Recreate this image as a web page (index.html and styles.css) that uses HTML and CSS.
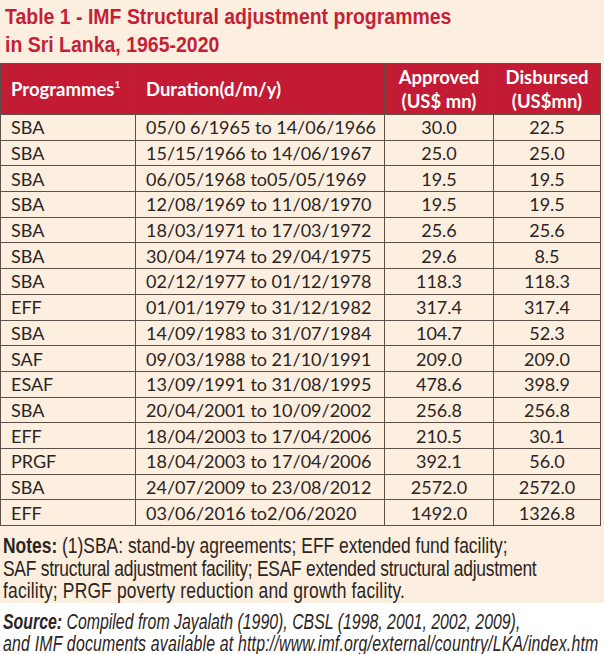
FILE: index.html
```html
<!DOCTYPE html>
<html>
<head>
<meta charset="utf-8">
<link rel="stylesheet" href="styles.css">
</head>
<body>
<div class="page">
  <div class="panel">
    <h1 class="title">Table 1 - IMF Structural adjustment programmes<br>in Sri Lanka, 1965-2020</h1>
    <table class="data">
      <colgroup>
        <col class="c1"><col class="c2"><col class="c3"><col class="c4">
      </colgroup>
      <thead>
        <tr>
          <th class="left">Programmes<sup>1</sup></th>
          <th class="left">Duration(d/m/y)</th>
          <th>Approved<br>(US$ mn)</th>
          <th>Disbursed<br>(US$mn)</th>
        </tr>
      </thead>
      <tbody>
        <tr><td>SBA</td><td>05/0 6/1965 to 14/06/1966</td><td class="num">30.0</td><td class="num">22.5</td></tr>
        <tr><td>SBA</td><td>15/15/1966 to 14/06/1967</td><td class="num">25.0</td><td class="num">25.0</td></tr>
        <tr><td>SBA</td><td>06/05/1968 to05/05/1969</td><td class="num">19.5</td><td class="num">19.5</td></tr>
        <tr><td>SBA</td><td>12/08/1969 to 11/08/1970</td><td class="num">19.5</td><td class="num">19.5</td></tr>
        <tr><td>SBA</td><td>18/03/1971 to 17/03/1972</td><td class="num">25.6</td><td class="num">25.6</td></tr>
        <tr><td>SBA</td><td>30/04/1974 to 29/04/1975</td><td class="num">29.6</td><td class="num">8.5</td></tr>
        <tr><td>SBA</td><td>02/12/1977 to 01/12/1978</td><td class="num">118.3</td><td class="num">118.3</td></tr>
        <tr><td>EFF</td><td>01/01/1979 to 31/12/1982</td><td class="num">317.4</td><td class="num">317.4</td></tr>
        <tr><td>SBA</td><td>14/09/1983 to 31/07/1984</td><td class="num">104.7</td><td class="num">52.3</td></tr>
        <tr><td>SAF</td><td>09/03/1988 to 21/10/1991</td><td class="num">209.0</td><td class="num">209.0</td></tr>
        <tr><td>ESAF</td><td>13/09/1991 to 31/08/1995</td><td class="num">478.6</td><td class="num">398.9</td></tr>
        <tr><td>SBA</td><td>20/04/2001 to 10/09/2002</td><td class="num">256.8</td><td class="num">256.8</td></tr>
        <tr><td>EFF</td><td>18/04/2003 to 17/04/2006</td><td class="num">210.5</td><td class="num">30.1</td></tr>
        <tr><td>PRGF</td><td>18/04/2003 to 17/04/2006</td><td class="num">392.1</td><td class="num">56.0</td></tr>
        <tr><td>SBA</td><td>24/07/2009 to 23/08/2012</td><td class="num">2572.0</td><td class="num">2572.0</td></tr>
        <tr><td>EFF</td><td>03/06/2016 to2/06/2020</td><td class="num">1492.0</td><td class="num">1326.8</td></tr>
      </tbody>
    </table>
    <p class="notes"><span class="line"><b>Notes:</b> (1)SBA: stand-by agreements; EFF extended fund facility;</span><span class="line tight">SAF structural adjustment facility; ESAF extended structural adjustment</span><span class="line loose">facility; PRGF poverty reduction and growth facility.</span></p>
  </div>
  <p class="source"><span class="line"><b>Source:</b> Compiled from Jayalath (1990), CBSL (1998, 2001, 2002, 2009),</span><span class="line loose">and IMF documents available at http://www.imf.org/external/country/LKA/index.htm</span></p>
</div>
</body>
</html>
```
FILE: styles.css
```css
html, body {
  margin: 0;
  padding: 0;
  background: #ffffff;
}
.page {
  width: 604px;
  height: 654px;
  overflow: hidden;
}
.panel {
  background: #fcefe0;
  height: 603px;
  padding-top: 3px;
  box-sizing: border-box;
}
.title {
  margin: 0 0 0 5px;
  font-family: "Liberation Sans", Arial, sans-serif;
  font-weight: bold;
  font-size: 22px;
  line-height: 28px;
  color: #c51f38;
  height: 60px;
  white-space: nowrap;
  transform: scaleX(0.885);
  transform-origin: left top;
}
.data {
  border-collapse: collapse;
  table-layout: fixed;
  width: 600px;
  font-family: Lato, "Open Sans", sans-serif;
  font-size: 18px;
  color: #2b2422;
}
.c1 { width: 135px; }
.c2 { width: 249px; }
.c3 { width: 109px; }
.c4 { width: 107px; }
.data th, .data td {
  border: 1.5px solid #5e5048;
  padding: 0 10px;
  white-space: nowrap;
}
.data thead tr {
  height: 51px;
}
.data th {
  background: #c21b33;
  color: #ffffff;
  font-weight: bold;
  font-size: 18.5px;
  line-height: 24px;
  text-align: center;
}
.data th.left { text-align: left; }
.data th sup {
  font-size: 10px;
  vertical-align: 8px;
  line-height: 0;
}
.data tbody tr {
  height: 25.7px;
}
.data td {
  line-height: 22px;
  text-align: left;
}
.data td.num { text-align: center; }
.line {
  display: block;
}
.notes {
  margin: 9px 0 0 3px;
  font-family: "Liberation Sans", Arial, sans-serif;
  font-size: 22px;
  line-height: 22.5px;
  color: #2b2422;
  white-space: nowrap;
  transform: scaleX(0.792);
  transform-origin: left top;
}
.notes .tight { letter-spacing: -0.33px; }
.notes .loose { letter-spacing: 0.22px; }
.source {
  margin: 8px 0 0 3px;
  font-family: "Liberation Sans", Arial, sans-serif;
  font-style: italic;
  font-size: 22px;
  line-height: 21.5px;
  color: #2b2422;
  white-space: nowrap;
  transform: scaleX(0.721);
  transform-origin: left top;
}
.source .loose { letter-spacing: 0.27px; }
```
